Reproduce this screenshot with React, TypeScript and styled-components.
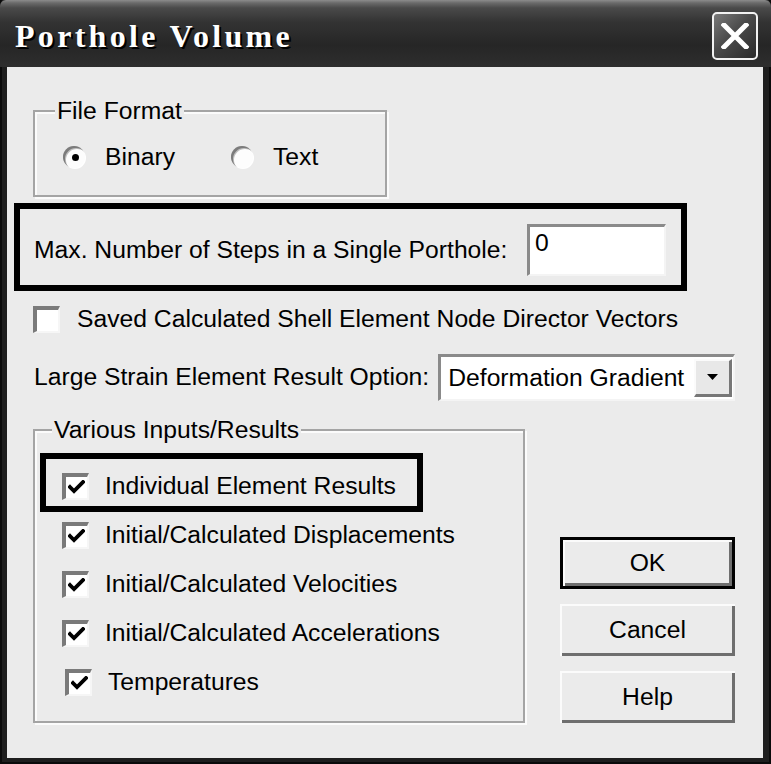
import React from "react";
import styled, { createGlobalStyle } from "styled-components";

const Global = createGlobalStyle`
  html, body { margin: 0; padding: 0; background: #1a1a1a; }
  #root { width: 771px; height: 764px; }
`;

const Window = styled.div`
  width: 771px;
  height: 764px;
  display: flex;
  flex-direction: column;
  background: #1e1e1e;
  box-shadow: inset 2px 0 0 #0a0a0a, inset -2px 0 0 #0a0a0a, inset 0 -2px 0 #0a0a0a;
  font-family: "Liberation Sans", Arial, sans-serif;
  font-size: 24.7px;
  color: #000;
`;

const TitleBar = styled.div`
  height: 67px;
  flex: none;
  display: flex;
  align-items: center;
  justify-content: space-between;
  padding: 0 13px 0 15px;
  box-sizing: border-box;
  border-radius: 6px 6px 0 0;
  background: linear-gradient(
    to bottom,
    #8c8c8c 0px,
    #6a6a6a 3px,
    #4a4a4a 8px,
    #333 22px,
    #262626 45px,
    #2e2e2e 67px
  );
`;

const Title = styled.span`
  font-family: "Liberation Serif", "Times New Roman", serif;
  font-weight: bold;
  font-size: 32px;
  color: #fff;
  text-shadow: 2px 2px 0 #000;
  letter-spacing: 3.3px;
  margin-top: 5px;
`;

const CloseButton = styled.div`
  width: 46px;
  height: 48px;
  box-sizing: border-box;
  border: 2px solid #f2f2f2;
  border-radius: 5px;
  background: linear-gradient(135deg, #7a7a7a 0%, #4a4a4a 45%, #2a2a2a 100%);
  display: flex;
  align-items: center;
  justify-content: center;
  margin-top: 4px;
`;

const Body = styled.div`
  flex: 1;
  margin: 0 8px 6px 7px;
  background: #ebebeb;
  display: flex;
  flex-direction: column;
  align-items: flex-start;
  padding-top: 43px;
  box-sizing: border-box;
`;

const Group = styled.div<{ $w: number; $h: number; $ml: number }>`
  position: relative;
  width: ${(p) => p.$w}px;
  height: ${(p) => p.$h}px;
  margin-left: ${(p) => p.$ml}px;
  box-sizing: border-box;
  border: 2px solid #a4a4a4;
  box-shadow: inset 2px 2px 0 #fbfbfb, 2px 2px 0 #fbfbfb;
  flex: none;
`;

const GroupLabel = styled.span<{ $left: number }>`
  position: absolute;
  top: -15px;
  left: ${(p) => p.$left}px;
  padding: 0 2px;
  line-height: 28px;
  background: #ebebeb;
`;

const RadioRow = styled.div`
  display: flex;
  align-items: center;
  padding: 32px 0 0 28px;
  height: 26px;
`;

const RadioItem = styled.label<{ $gap: number }>`
  display: flex;
  align-items: center;
  gap: ${(p) => p.$gap}px;
  margin-right: 56px;
  line-height: 1;
`;

const RadioCircle = styled.span<{ $on?: boolean }>`
  width: 22px;
  height: 22px;
  border-radius: 50%;
  background: #fdfdfd;
  box-shadow: inset 2px 2px 0 #7c7c7c, inset 3px 3px 0 #c0c0c0, 1px 1px 0 #fff;
  display: flex;
  align-items: center;
  justify-content: center;
  flex: none;
  &::after {
    content: "";
    width: 7px;
    height: 7px;
    border-radius: 50%;
    background: ${(p) => (p.$on ? "#000" : "transparent")};
    margin: 2px 0 0 2px;
  }
`;

const HighlightBox = styled.div<{ $w: number; $h: number; $ml: number; $mt: number }>`
  width: ${(p) => p.$w}px;
  height: ${(p) => p.$h}px;
  margin-left: ${(p) => p.$ml}px;
  margin-top: ${(p) => p.$mt}px;
  box-sizing: border-box;
  border: 6px solid #000;
  flex: none;
`;

const StepsInner = styled.div`
  height: 100%;
  display: flex;
  align-items: center;
  justify-content: space-between;
  padding: 6px 15px 0 14px;
  box-sizing: border-box;
`;

const Label = styled.span`
  line-height: 1;
  white-space: nowrap;
`;

const TextField = styled.div`
  width: 139px;
  height: 52px;
  box-sizing: border-box;
  background: #fff;
  border-style: solid;
  border-width: 3px 2px 2px 3px;
  border-color: #8a8a8a #f4f4f4 #f4f4f4 #8a8a8a;
  padding: 4px 0 0 5px;
  line-height: 1;
`;

const CheckRow = styled.div<{ $ml?: number; $mt?: number; $gap: number }>`
  display: flex;
  align-items: center;
  height: 40px;
  gap: ${(p) => p.$gap}px;
  margin-left: ${(p) => p.$ml ?? 0}px;
  margin-top: ${(p) => p.$mt ?? 0}px;
  flex: none;
`;

const CheckBoxBox = styled.span`
  width: 27px;
  height: 27px;
  box-sizing: border-box;
  background: #fff;
  border-style: solid;
  border-width: 4px 2px 2px 4px;
  border-color: #7a7a7a #f6f6f6 #f6f6f6 #7a7a7a;
  display: flex;
  align-items: center;
  justify-content: center;
  flex: none;
`;

const LargeRow = styled.div`
  display: flex;
  align-items: center;
  gap: 9px;
  margin: 15px 0 0 27px;
  flex: none;
`;

const Select = styled.div`
  width: 297px;
  height: 47px;
  box-sizing: border-box;
  background: #fff;
  border-style: solid;
  border-width: 3px 2px 2px 3px;
  border-color: #8a8a8a #f4f4f4 #f4f4f4 #8a8a8a;
  display: flex;
  align-items: center;
  justify-content: space-between;
  padding: 0 1px 0 7px;
`;

const DropButton = styled.span`
  width: 38px;
  height: 38px;
  box-sizing: border-box;
  background: #e8e8e8;
  border-style: solid;
  border-width: 2px 3px 3px 2px;
  border-color: #fbfbfb #777 #777 #fbfbfb;
  display: flex;
  align-items: center;
  justify-content: center;
`;

const BottomRow = styled.div`
  display: flex;
  align-items: flex-end;
  margin: 28px 0 0 26px;
  flex: none;
`;

const VariousInner = styled.div`
  display: flex;
  flex-direction: column;
  align-items: flex-start;
  padding: 22px 0 0 5px;
`;

const HiInner = styled.div`
  padding: 7px 0 0 16px;
`;

const CheckList = styled.div`
  display: flex;
  flex-direction: column;
  gap: 9px;
  margin: 3px 0 0 -5px;
`;

const ButtonCol = styled.div`
  display: flex;
  flex-direction: column;
  gap: 15px;
  margin-left: 35px;
`;

const Button = styled.div<{ $default?: boolean }>`
  width: 175px;
  height: 52px;
  box-sizing: border-box;
  display: flex;
  align-items: center;
  justify-content: center;
  background: #ebebeb;
  line-height: 1;
  border: ${(p) => (p.$default ? "3px solid #000" : "none")};
  box-shadow: inset 2px 2px 0 #fbfbfb, inset -3px -3px 0 #6e6e6e;
`;

const Check = () => (
  <svg width="17" height="15" viewBox="0 0 17 15">
    <polyline points="2,7 6,11 15,2" fill="none" stroke="#000" strokeWidth="3.8" strokeLinecap="square" />
  </svg>
);

const CheckItem: React.FC<{ label: string; ml?: number; checked?: boolean }> = ({ label, ml, checked = true }) => (
  <CheckRow $ml={ml} $gap={16}>
    <CheckBoxBox>{checked && <Check />}</CheckBoxBox>
    <Label>{label}</Label>
  </CheckRow>
);

export default function App() {
  return (
    <>
      <Global />
      <Window>
        <TitleBar>
          <Title>Porthole Volume</Title>
          <CloseButton>
            <svg width="28" height="26" viewBox="0 0 28 26">
              <path d="M3 2 L25 24 M25 2 L3 24" stroke="#fff" strokeWidth="5" strokeLinecap="square" />
            </svg>
          </CloseButton>
        </TitleBar>
        <Body>
          <Group $w={354} $h={87} $ml={26}>
            <GroupLabel $left={20}>File Format</GroupLabel>
            <RadioRow>
              <RadioItem $gap={20}>
                <RadioCircle $on />
                <span>Binary</span>
              </RadioItem>
              <RadioItem $gap={20}>
                <RadioCircle />
                <span>Text</span>
              </RadioItem>
            </RadioRow>
          </Group>

          <HighlightBox $w={673} $h={88} $ml={7} $mt={6}>
            <StepsInner>
              <Label>Max. Number of Steps in a Single Porthole:</Label>
              <TextField>0</TextField>
            </StepsInner>
          </HighlightBox>

          <CheckRow $ml={26} $mt={8} $gap={17}>
            <CheckBoxBox />
            <Label>Saved Calculated Shell Element Node Director Vectors</Label>
          </CheckRow>

          <LargeRow>
            <Label>Large Strain Element Result Option:</Label>
            <Select>
              <Label>Deformation Gradient</Label>
              <DropButton>
                <svg width="11" height="7" viewBox="0 0 11 7">
                  <polygon points="0,0 11,0 5.5,6" fill="#000" />
                </svg>
              </DropButton>
            </Select>
          </LargeRow>

          <BottomRow>
            <Group $w={492} $h={294} $ml={0}>
              <GroupLabel $left={17}>Various Inputs/Results</GroupLabel>
              <VariousInner>
                <HighlightBox $w={383} $h={59} $ml={0} $mt={0}>
                  <HiInner>
                    <CheckItem label="Individual Element Results" />
                  </HiInner>
                </HighlightBox>
                <CheckList>
                  <CheckItem label="Initial/Calculated Displacements" ml={27} />
                  <CheckItem label="Initial/Calculated Velocities" ml={27} />
                  <CheckItem label="Initial/Calculated Accelerations" ml={27} />
                  <CheckItem label="Temperatures" ml={30} />
                </CheckList>
              </VariousInner>
            </Group>
            <ButtonCol>
              <Button $default>OK</Button>
              <Button>Cancel</Button>
              <Button>Help</Button>
            </ButtonCol>
          </BottomRow>
        </Body>
      </Window>
    </>
  );
}
